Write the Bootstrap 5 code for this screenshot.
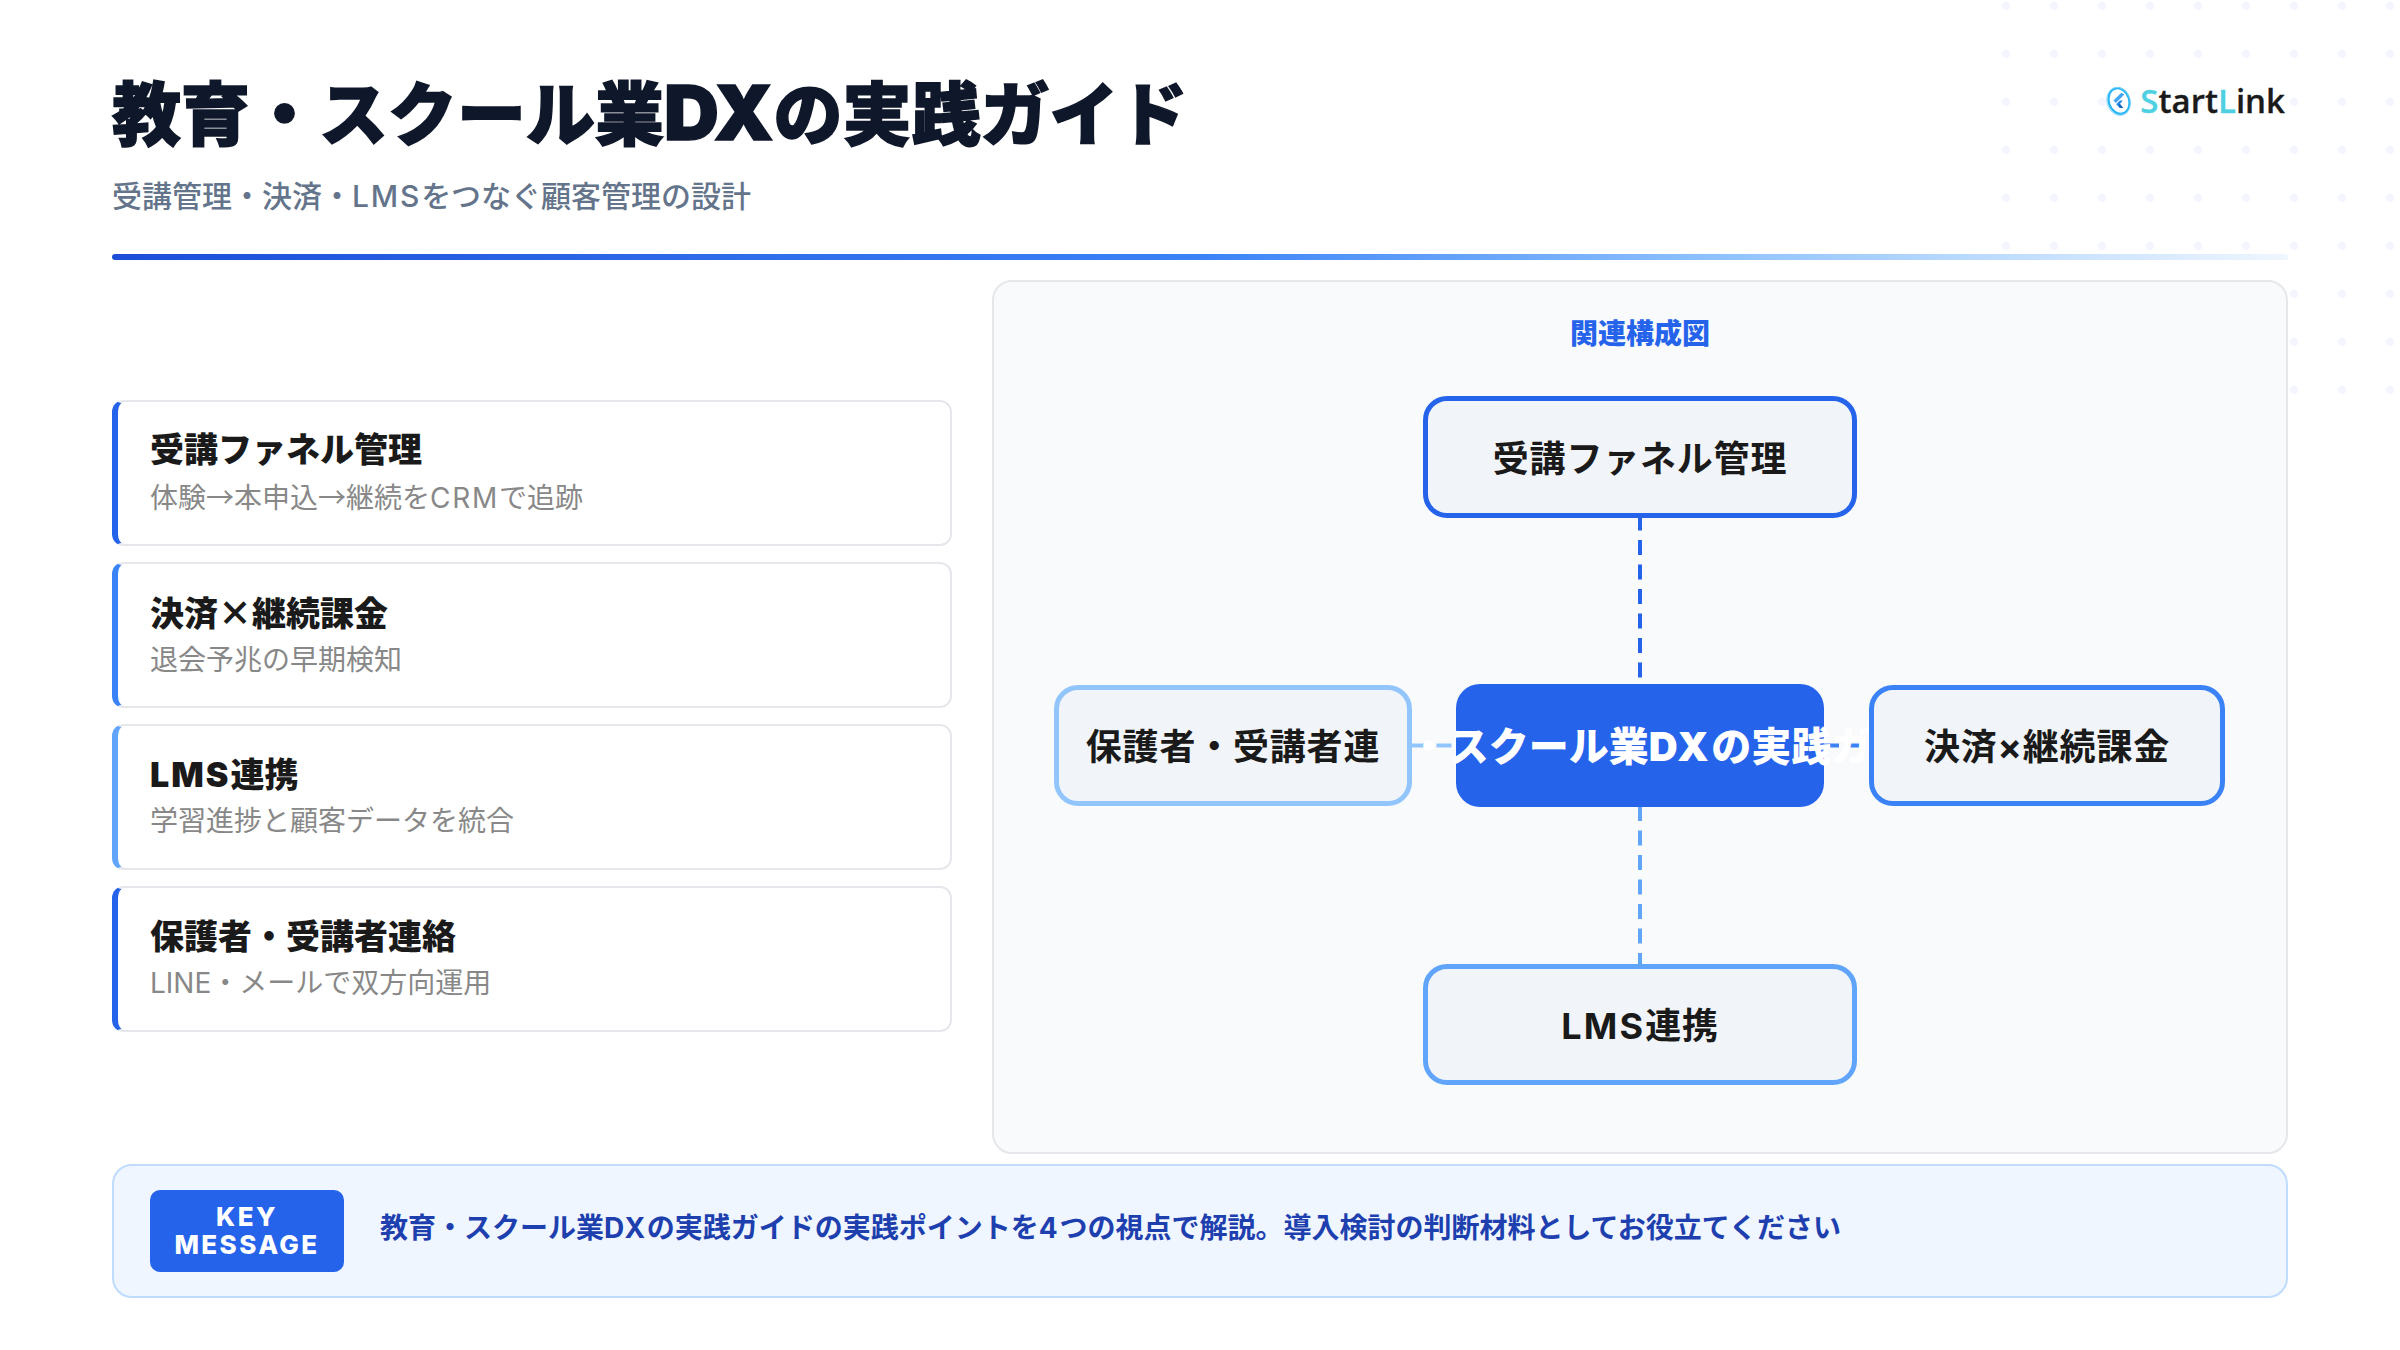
<!DOCTYPE html>
<html lang="ja">
<head>
<meta charset="utf-8">
<title>教育・スクール業DXの実践ガイド</title>
<link href="https://cdn.jsdelivr.net/npm/bootstrap@5.3.0/dist/css/bootstrap.min.css" rel="stylesheet">
<style>
html,body{margin:0;background:#fff}
body{font-family:"Inter","Noto Sans CJK JP",sans-serif;color:#1a1a1a}
.slide{width:2400px;height:1350px;padding:0 112px;overflow:hidden;position:relative;background:#fff}
.dots{position:absolute;top:0;right:0;width:400px;height:400px;background-image:radial-gradient(circle at 6px 6px,#f5f5ff 4px,transparent 4.5px);background-size:48px 48px}
.head{height:254px;position:relative}
.ttl{font-size:69px;font-weight:900;color:#0f172a;line-height:1;padding-top:81px;margin:0;-webkit-text-stroke:1.5px #0f172a}
.ttl-lat{font-size:76px;line-height:0}
.lat{letter-spacing:.06em}
.cjk{font-family:"Noto Sans CJK JP",sans-serif}
.subttl{font-size:30px;font-weight:500;color:#64748b;line-height:1;margin:31px 0 0}
.logo{position:absolute;right:3px;top:83px;gap:8px}
.logo-txt{font-family:"Open Sans",sans-serif;font-weight:600;font-size:33px;line-height:36px;color:#1a1a1a;-webkit-text-stroke:.3px #1a1a1a}
.logo-txt b{font-weight:600;color:#4dd0e1;-webkit-text-stroke:.3px #4dd0e1}
.rule{height:6px;border-radius:3px;background:linear-gradient(90deg,#1d4ed8,#3b82f6 50%,#93c5fd 75%,#eff6ff)}
.body-row{height:874px;margin-top:20px;gap:40px}
.leftcol{width:840px;gap:16px;padding-bottom:2px}
.item{height:146px;background:#fff;border:2px solid #e5e7eb;border-left:6px solid #2563eb;border-radius:12px;padding:4px 0 0 32px}
.item.c2{border-left-color:#3b82f6}
.item.c3{border-left-color:#60a5fa}
.item-t{font-size:34px;font-weight:900;line-height:44px;color:#1a1a1a;margin:-2px 0 1px}
.item-s{font-size:28px;font-weight:400;line-height:46px;color:#888}
.panel{width:1296px;background:#f8fafc;border:2px solid #e5e7eb;border-radius:20px;position:relative}
.panel-t{position:absolute;left:0;right:0;top:34px;text-align:center;font-size:28px;font-weight:900;line-height:36px;color:#2563eb}
.links{position:absolute;left:-2px;top:-2px;width:1296px;height:874px}
.node{position:absolute;display:flex;align-items:center;justify-content:center;white-space:nowrap;background:#f1f5f9;border:5px solid #2563eb;border-radius:24px;font-size:36px;font-weight:700;letter-spacing:.8px;color:#1a1a1a;padding-top:3px}
.n-top{left:429px;top:114px;width:434px;height:122px}
.n-bot{left:429px;top:682px;width:434px;height:121px;border-color:#60a5fa}
.n-lft{left:60px;top:403px;width:358px;height:121px;border-color:#93c5fd}
.n-rgt{left:875px;top:403px;width:356px;height:121px;border-color:#3b82f6}
.n-mid{position:absolute;left:462px;top:402px;width:368px;height:123px;background:#2563eb;border-radius:24px;display:flex;align-items:center;justify-content:center;white-space:nowrap;color:#fff;font-size:40px;font-weight:900;padding-top:3px}
.n-mid>span{flex-shrink:0}
.keybar{height:134px;margin-top:10px;background:#eff6ff;border:2px solid #bfdbfe;border-radius:20px;padding-left:36px;gap:36px}
.keytag{width:194px;height:82px;background:#2563eb;border-radius:10px;color:#fff;font-size:26px;font-weight:800;line-height:28px;letter-spacing:2.4px;text-align:center}
.keytxt{font-size:28px;font-weight:700;color:#1e40af;line-height:1;margin-top:-6px}
</style>
</head>
<body>
<div class="slide">
  <div class="dots"></div>
  <div class="head">
    <h1 class="ttl">教育・スクール業<span class="ttl-lat">DX</span>の実践ガイド</h1>
    <p class="subttl">受講管理・決済・<span class="lat">LMS</span>をつなぐ顧客管理の設計</p>
    <div class="logo d-flex align-items-center">
      <svg width="26" height="34" viewBox="0 0 28 34" fill="none" aria-hidden="true">
        <ellipse cx="14" cy="17" rx="11" ry="14" transform="rotate(-18 14 17)" stroke="#29b6f6" stroke-width="2.4"/>
        <ellipse cx="13.5" cy="17.5" rx="12.5" ry="15.5" transform="rotate(-18 13.5 17.5)" stroke="#81d4fa" stroke-width=".8"/>
        <path d="M16.5 8 8 16.5l2.6 2.6L19.8 10Z" fill="#42a5f5"/>
        <path d="M15 16.5 11 20.5l4 4h3.6l-4-4 3.6-4Z" fill="#1e88e5"/>
        <path d="M13.2 21.6 15 20l3.6 4.5H15Z" fill="#1565c0"/>
      </svg>
      <span class="logo-txt"><b>S</b>tart<b>L</b>ink</span>
    </div>
  </div>
  <div class="rule"></div>
  <div class="body-row d-flex">
    <div class="leftcol d-flex flex-column justify-content-center">
      <div class="item d-flex flex-column justify-content-center"><div class="item-t">受講ファネル管理</div><div class="item-s">体験<span class="cjk">→</span>本申込<span class="cjk">→</span>継続を<span class="lat">CRM</span>で追跡</div></div>
      <div class="item c2 d-flex flex-column justify-content-center"><div class="item-t">決済<span class="cjk">×</span>継続課金</div><div class="item-s">退会予兆の早期検知</div></div>
      <div class="item c3 d-flex flex-column justify-content-center"><div class="item-t"><span class="lat">LMS</span>連携</div><div class="item-s">学習進捗と顧客データを統合</div></div>
      <div class="item d-flex flex-column justify-content-center"><div class="item-t">保護者・受講者連絡</div><div class="item-s">LINE・メールで双方向運用</div></div>
    </div>
    <div class="panel">
      <div class="panel-t">関連構成図</div>
      <svg class="links" viewBox="0 0 1296 874" fill="none" stroke-width="4" stroke-dasharray="15 9.5" aria-hidden="true">
        <line x1="648" y1="235.5" x2="648" y2="404" stroke="#2563eb"/>
        <line x1="648" y1="526" x2="648" y2="684" stroke="#60a5fa"/>
        <line x1="420" y1="465.5" x2="464" y2="465.5" stroke="#93c5fd"/>
        <line x1="832" y1="465.5" x2="877" y2="465.5" stroke="#3b82f6"/>
      </svg>
      <div class="n-mid"><span>教育・スクール業<span class="lat">DX</span>の実践ガイド</span></div>
      <div class="node n-top">受講ファネル管理</div>
      <div class="node n-lft">保護者・受講者連</div>
      <div class="node n-rgt">決済×継続課金</div>
      <div class="node n-bot"><span class="lat">LMS</span>連携</div>
    </div>
  </div>
  <div class="keybar d-flex align-items-center">
    <div class="keytag d-flex align-items-center justify-content-center">KEY<br>MESSAGE</div>
    <div class="keytxt">教育・スクール業<span class="lat">DX</span>の実践ガイドの実践ポイントを<span class="lat">4</span>つの視点で解説。導入検討の判断材料としてお役立てください</div>
  </div>
</div>
<script src="https://cdn.jsdelivr.net/npm/bootstrap@5.3.0/dist/js/bootstrap.bundle.min.js"></script>
</body>
</html>
